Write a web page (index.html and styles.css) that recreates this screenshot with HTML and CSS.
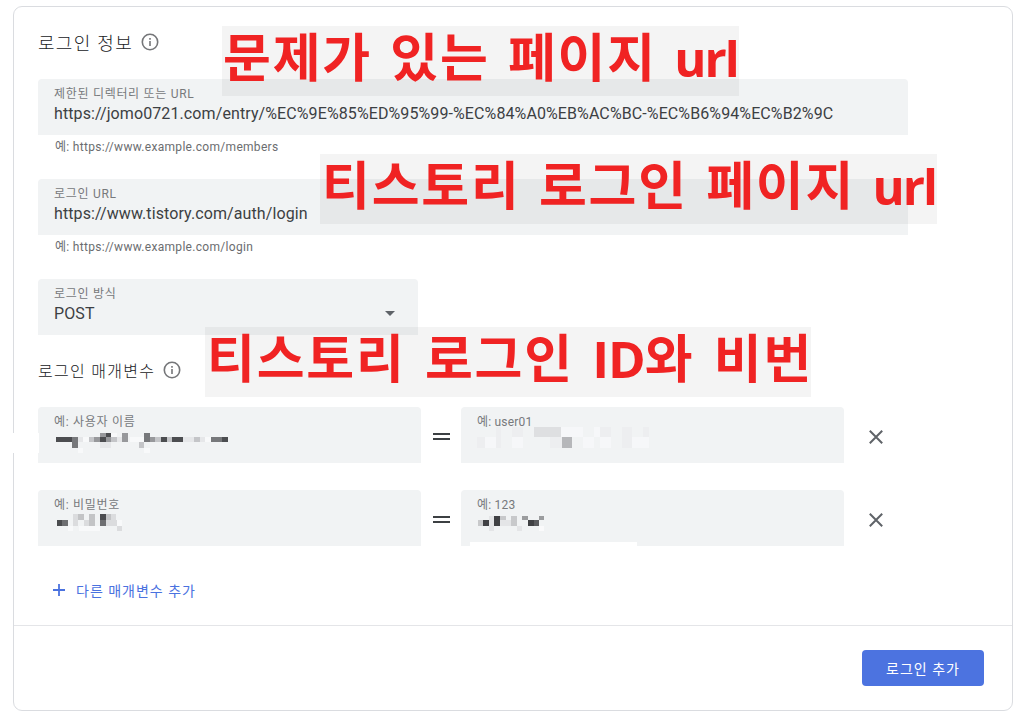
FILE: index.html
```html
<!DOCTYPE html>
<html lang="ko">
<head>
    <meta charset="UTF-8">
    <meta name="viewport" content="width=device-width, initial-scale=1.0">
    <title>로그인 정보</title>
    <link rel="stylesheet" href="styles.css">
</head>
<body>

    <form class="card">
        <div class="card-body">
            <h2 class="title title-main">로그인 정보
                <svg class="info" viewBox="0 0 18 18"><circle cx="9" cy="9" r="7.7"/><path d="M9 8v5M9 5v1.7"/></svg>
            </h2>

            <div class="field">
                <label>제한된 디렉터리 또는 URL</label>
                <span class="value">https://jomo0721.com/entry/%EC%9E%85%ED%95%99-%EC%84%A0%EB%AC%BC-%EC%B6%94%EC%B2%9C</span>
            </div>
            <p class="hint">예: https://www.example.com/members</p>

            <div class="field">
                <label>로그인 URL</label>
                <span class="value">https://www.tistory.com/auth/login</span>
            </div>
            <p class="hint">예: https://www.example.com/login</p>

            <div class="field select">
                <label>로그인 방식</label>
                <span class="value">POST</span>
                <span class="arrow"></span>
            </div>

            <h3 class="title title-params">로그인 매개변수
                <svg class="info" viewBox="0 0 18 18"><circle cx="9" cy="9" r="7.7"/><path d="M9 8v5M9 5v1.7"/></svg>
            </h3>

            <div class="param-row">
                <div class="field">
                    <label>예: 사용자 이름</label>
                    <svg class="mosaic mosaic-name" viewBox="0 0 576 60">
                        <path fill="#fff" d="M-78 0H3V60H-78z"/>
                        <path fill="#f8f9fa" d="M136 12h17v15h-17zM219 0h17v12h-17zM275 12h43v15h-43zM318 44h17v16h-17zM502 12h17v15h-17zM119 44h17v16h-17z"/>
                        <path fill="#e6e7e9" d="M119 12h17v15h-17zM236 12h16v15h-16zM435 12h33v15h-33zM485 12h17v15h-17zM186 27h33v17h-33z"/>
                        <path fill="#c4c5c8" d="M153 12h16v15h-16zM219 12h17v15h-17zM352 12h16v15h-16zM386 12h16v15h-16zM303 27h15v17h-15zM468 12h17v15h-17z"/>
                        <path fill="#97989b" d="M169 12h17v15h-17zM186 0h17v12h-17zM203 12h16v15h-16zM252 0h18v27h-18zM335 12h17v15h-17z"/>
                        <path fill="#77787b" d="M102 12h17v32h-17zM318 0h17v27h-17zM519 12h33v15h-33z"/>
                        <path fill="#4c4d50" d="M54 12h48v15H54zM203 0h16v12h-16zM186 12h17v15h-17zM368 12h18v15h-18zM402 12h33v15h-33zM552 12h18v15h-18z"/>
                    </svg>
                </div>
                <span class="equals"></span>
                <div class="field">
                    <label class="latin">예: user01</label>
                    <svg class="mosaic mosaic-user" viewBox="0 0 530 64">
                        <path fill="#f6f7f9" d="M25 30h33v33H25zM109 30h33v33h-33zM257 0h66v30h-66zM325 30h33v33h-33zM375 30h34v33h-34zM475 30h50v33h-50zM358 0h17v30h-17z"/>
                        <path fill="#edeef0" d="M0 30h25v33H0zM58 0h17v63H58zM109 0h33v30h-33zM225 30h34v33h-34zM375 0h34v30h-34zM442 0h33v63h-33zM508 0h17v30h-17z"/>
                        <path fill="#dedfe1" d="M175 0h83v30h-83z"/>
                        <path fill="#b6b7ba" d="M259 30h33v33h-33z"/>
                    </svg>
                </div>
                <svg class="remove" viewBox="0 0 14 14"><path d="M.8.8l12.4 12.4M13.2.8L.8 13.2"/></svg>
            </div>

            <div class="param-row">
                <div class="field">
                    <label>예: 비밀번호</label>
                    <svg class="mosaic mosaic-pass" viewBox="0 0 200 52">
                        <path fill="#f8f9fa" d="M34 36h17v16H34zM67 36h66v16H67zM183 19h17v17h-17z"/>
                        <path fill="#dbdcde" d="M48 0h17v36H48zM82 19h17v17H82zM149 19h34v17h-34zM165 0h17v19h-17zM183 36h17v16h-17z"/>
                        <path fill="#c3c4c6" d="M65 0h17v19H65zM99 0h17v36H99zM149 0h16v19h-16z"/>
                        <path fill="#4b4c4f" d="M0 18h17v18H0zM132 0h18v19h-18z"/>
                        <path fill="#6d6e71" d="M17 18h16v18H17zM132 19h18v17h-18z"/>
                    </svg>
                </div>
                <span class="equals"></span>
                <div class="field">
                    <label class="latin">예: 123</label>
                    <svg class="mosaic mosaic-123" viewBox="0 0 200 45">
                        <path fill="#e4e5e7" d="M33 0h16v45H33zM66 13h33v17H66zM117 30h16v15h-16z"/>
                        <path fill="#c8c9cb" d="M0 13h16v17H0zM65 0h19v13H65zM99 0h18v30H99z"/>
                        <path fill="#404144" d="M15 13h18v17H15zM48 0h18v30H48zM150 13h17v17h-17z"/>
                        <path fill="#5a5b5e" d="M167 13h17v17h-17z"/>
                        <path fill="#9b9c9e" d="M132 0h18v13h-18zM183 0h16v13h-16z"/>
                        <path fill="#fafafb" d="M183 30h16v15h-16z"/>
                    </svg>
                    <span class="patch"></span>
                </div>
                <svg class="remove" viewBox="0 0 14 14"><path d="M.8.8l12.4 12.4M13.2.8L.8 13.2"/></svg>
            </div>

            <a class="add-param">
                <svg viewBox="0 0 12 12"><path d="M6 0v12M0 6h12"/></svg>
                다른 매개변수 추가
            </a>
        </div>

        <div class="card-footer">
            <button type="button">로그인 추가</button>
        </div>
    </form>

    <div class="note note-page">문제가 있는 페이지 <span>url</span></div>
    <div class="note note-login">티스토리 로그인 페이지 <span>url</span></div>
    <div class="note note-id">티스토리 로그인 <span>ID</span>와 비번</div>

</body>
</html>
```

FILE: styles.css
```css
* {
    box-sizing: border-box;
}

body {
    margin: 0;
    padding: 6px 4px 0 13px;
    background: #fff;
    font-family: Roboto, 'Noto Sans CJK KR', sans-serif;
    color: #3c4043;
}

.card {
    height: 705px;
    display: flex;
    flex-direction: column;
    border: 1px solid #dadce0;
    border-radius: 9px;
}

.card-body {
    height: 619px;
    padding: 0 24px;
}

.title {
    display: flex;
    align-items: center;
    gap: 8px;
    height: 72px;
    margin: 0;
    padding-bottom: 3px;
    color: #202124;
    font-weight: 300;
    letter-spacing: 1.3px;
}

.title-main {
    font-size: 18px;
}

.title-params {
    font-size: 16px;
}

.info {
    width: 18px;
    height: 18px;
    fill: none;
    stroke: #757679;
    stroke-width: 1.6;
}

.field {
    position: relative;
    display: flex;
    flex-direction: column;
    width: 870px;
    height: 56px;
    padding: 7px 16px;
    background: #f1f3f4;
    border-radius: 4px 4px 0 0;
}

.field label {
    height: 17px;
    line-height: 17px;
    font-size: 12px;
    letter-spacing: 0.7px;
    color: #77797c;
    white-space: nowrap;
}

.field label.latin {
    letter-spacing: 0.2px;
}

.value {
    font-size: 16px;
    line-height: 22px;
    letter-spacing: 0.1px;
}

.hint {
    height: 44px;
    margin: 0;
    padding: 3px 17px;
    font-size: 12px;
    line-height: 18px;
    letter-spacing: 0.3px;
    color: #6b6d70;
}

.field.select {
    width: 380px;
}

.arrow {
    position: absolute;
    right: 23px;
    top: 32px;
    border: 5px solid transparent;
    border-top-color: #5f6368;
    border-bottom: 0;
}

.param-row {
    display: flex;
    align-items: center;
    margin-bottom: 27px;
}

.param-row .field {
    width: 383px;
}

.equals {
    width: 17px;
    height: 7px;
    margin: 3px 11px 0 12px;
    border: solid #3c4043;
    border-width: 2px 0;
}

.remove {
    width: 14px;
    height: 14px;
    margin: 4px 0 0 25px;
    fill: none;
    stroke: #5f6368;
    stroke-width: 2;
}

/* pixelated private values */
.mosaic {
    position: absolute;
    overflow: visible;
    shape-rendering: crispEdges;
}

.mosaic-name {
    left: 0;
    top: 26px;
    width: 192px;
    height: 20px;
}

.mosaic-user {
    left: 14px;
    top: 20px;
    width: 177px;
    height: 21px;
}

.mosaic-pass {
    left: 18px;
    top: 24px;
    width: 67px;
    height: 17px;
}

.mosaic-123 {
    left: 17px;
    top: 26px;
    width: 67px;
    height: 15px;
}

.patch {
    position: absolute;
    left: 9px;
    bottom: 0;
    width: 167px;
    height: 4px;
    background: #fff;
}

.add-param {
    display: flex;
    align-items: center;
    gap: 11px;
    height: 36px;
    padding: 0 0 2px 15px;
    font-size: 14px;
    letter-spacing: 1px;
    color: #4a72df;
}

.add-param svg {
    width: 12px;
    height: 12px;
    stroke: #4a72df;
    stroke-width: 1.8;
}

.card-footer {
    display: flex;
    justify-content: flex-end;
    padding: 24px 28px;
    border-top: 1px solid #e4e5e8;
}

button {
    width: 122px;
    height: 36px;
    padding: 0 0 1px;
    border: 0;
    border-radius: 4px;
    background: #4c73e0;
    color: #fff;
    font-family: inherit;
    font-size: 14px;
    letter-spacing: 1px;
}

/* red notes laid over the form */
.note {
    position: absolute;
    height: 70px;
    padding-left: 2px;
    line-height: 58px;
    background: rgba(0, 0, 0, 0.044);
    color: #f02323;
    font-family: 'Noto Sans CJK KR', sans-serif;
    font-size: 52px;
    font-weight: 700;
    letter-spacing: 1.8px;
    word-spacing: 2px;
    white-space: nowrap;
}

.note span {
    margin-left: -1px;
    font-family: 'Open Sans', sans-serif;
    font-size: 49px;
    line-height: 1;
    letter-spacing: -2px;
}

.note-page {
    left: 222px;
    top: 26px;
    width: 517px;
    padding-left: 1px;
}

.note-login {
    left: 320px;
    top: 154px;
    width: 617px;
}

.note-id {
    left: 205px;
    top: 327px;
    width: 606px;
    word-spacing: 3px;
}

.note-id span {
    font-size: 51px;
    letter-spacing: -1px;
}
```
